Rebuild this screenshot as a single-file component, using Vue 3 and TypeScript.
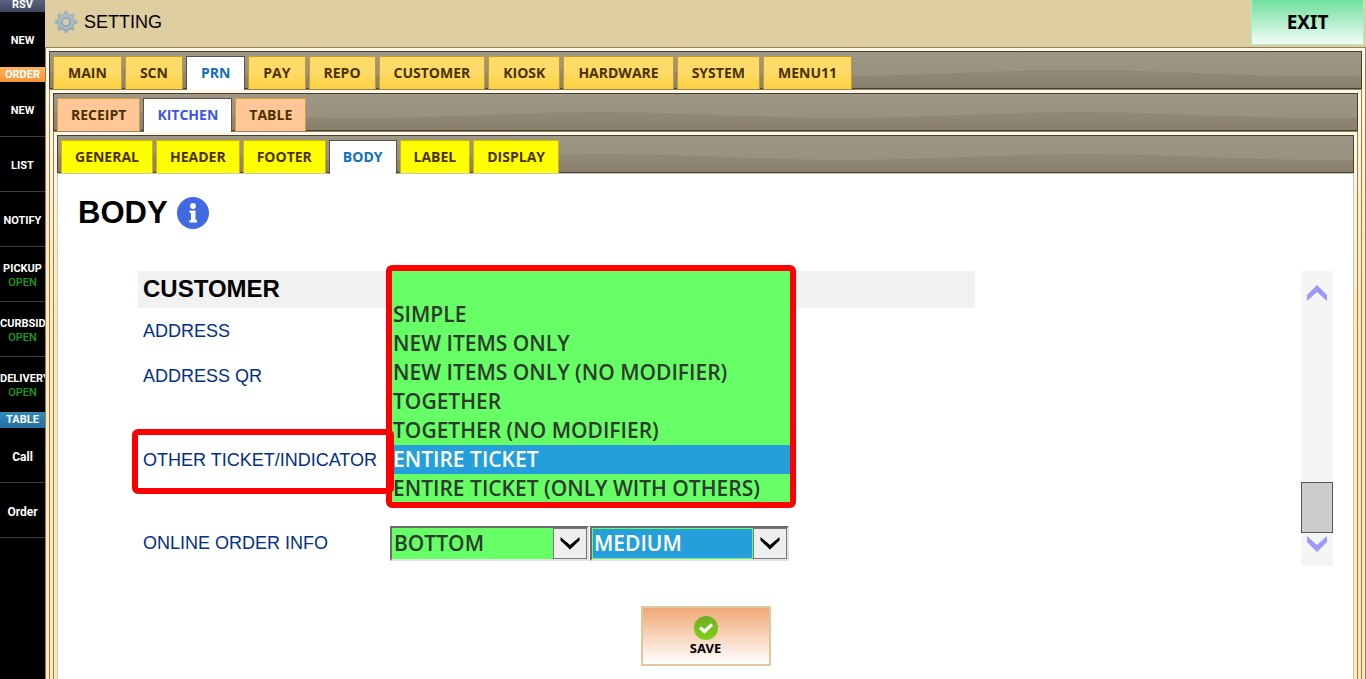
<script setup lang="ts">
import { ref } from 'vue'

interface SideItem { kind: 'head' | 'item'; text: string; tone?: string; sub?: string; large?: boolean }

const side: SideItem[] = [
  { kind: 'head', text: 'RSV', tone: 'rsv' },
  { kind: 'item', text: 'NEW', tone: 'last' },
  { kind: 'head', text: 'ORDER', tone: 'order' },
  { kind: 'item', text: 'NEW' },
  { kind: 'item', text: 'LIST' },
  { kind: 'item', text: 'NOTIFY' },
  { kind: 'item', text: 'PICKUP', sub: 'OPEN' },
  { kind: 'item', text: 'CURBSIDE', sub: 'OPEN' },
  { kind: 'item', text: 'DELIVERY', sub: 'OPEN', tone: 'last' },
  { kind: 'head', text: 'TABLE', tone: 'tables' },
  { kind: 'item', text: 'Call', large: true },
  { kind: 'item', text: 'Order', large: true },
]

const mainTabs: string[] = ['MAIN', 'SCN', 'PRN', 'PAY', 'REPO', 'CUSTOMER', 'KIOSK', 'HARDWARE', 'SYSTEM', 'MENU11']
const printerTabs: string[] = ['RECEIPT', 'KITCHEN', 'TABLE']
const kitchenTabs: string[] = ['GENERAL', 'HEADER', 'FOOTER', 'BODY', 'LABEL', 'DISPLAY']
const mainTab = ref('PRN')
const printerTab = ref('KITCHEN')
const kitchenTab = ref('BODY')

const modes: string[] = ['', 'SIMPLE', 'NEW ITEMS ONLY', 'NEW ITEMS ONLY (NO MODIFIER)', 'TOGETHER', 'TOGETHER (NO MODIFIER)', 'ENTIRE TICKET', 'ENTIRE TICKET (ONLY WITH OTHERS)']
const mode = ref('ENTIRE TICKET')
const place = ref('BOTTOM')
const size = ref('MEDIUM')
</script>

<template>
  <div class="app">
    <nav class="side">
      <template v-for="(s, i) in side" :key="i">
        <div v-if="s.kind === 'head'" class="side-head" :class="s.tone">{{ s.text }}</div>
        <button v-else class="side-item" :class="[s.tone, { large: s.large }]">
          <span>{{ s.text }}</span>
          <span v-if="s.sub" class="open">{{ s.sub }}</span>
        </button>
      </template>
    </nav>

    <div class="work">
      <header class="top">
        <svg class="gear" viewBox="0 0 24 24" width="24" height="24" aria-hidden="true">
          <defs>
            <linearGradient id="gearFill" x1="0" y1="0" x2="0" y2="1">
              <stop offset="0" stop-color="#b4bdbf" />
              <stop offset="1" stop-color="#93a2a9" />
            </linearGradient>
          </defs>
          <g fill="url(#gearFill)">
            <path v-for="n in 8" :key="n" d="M9.500 5L10.300 0.500H13.700L14.500 5Z" :transform="`rotate(${n * 45} 12 12)`" />
            <circle cx="12" cy="12" r="8.800" />
          </g>
          <circle cx="12" cy="12" r="6.300" fill="none" stroke="#a6bfcc" stroke-width="2" />
          <circle cx="12" cy="12" r="4" fill="#c3cccc" stroke="#8f9ca2" />
          <circle cx="12" cy="12" r="2" fill="#dfce9f" />
        </svg>
        <span class="title">SETTING</span>
        <button class="exit">EXIT</button>
      </header>

      <div class="panel">
        <div class="bar">
          <button v-for="t in mainTabs" :key="t" class="tab" :class="{ active: t === mainTab }" @click="mainTab = t">{{ t }}</button>
        </div>
        <div class="panel">
          <div class="bar">
            <button v-for="t in printerTabs" :key="t" class="tab printer" :class="{ active: t === printerTab }" @click="printerTab = t">{{ t }}</button>
          </div>
          <div class="panel">
            <div class="bar">
              <button v-for="t in kitchenTabs" :key="t" class="tab kitchen" :class="{ active: t === kitchenTab }" @click="kitchenTab = t">{{ t }}</button>
            </div>

            <main class="content">
              <h1>
                BODY
                <svg viewBox="0 0 32 32" width="32" height="32" aria-hidden="true">
                  <circle cx="16" cy="16" r="16" fill="#4169e1" />
                  <circle cx="16" cy="9" r="2.900" fill="#fff" />
                  <path d="M12.500 13.500H18.500V23H20V25.500H12.500V23H14V16H12.500Z" fill="#fff" />
                </svg>
              </h1>

              <div class="scroller">
                <section class="form">
                  <h2>CUSTOMER</h2>
                  <div class="row">ADDRESS</div>
                  <div class="row">ADDRESS QR</div>
                  <div class="row other">
                    <label class="marked" for="mode">OTHER TICKET/INDICATOR</label>
                    <select id="mode" v-model="mode" class="list" size="8">
                      <option v-for="m in modes" :key="m" :value="m">{{ m }}</option>
                    </select>
                  </div>
                  <div class="row online">
                    <label for="place">ONLINE ORDER INFO</label>
                    <div class="drop">
                      <select id="place" v-model="place"><option>BOTTOM</option><option>TOP</option></select>
                      <span class="arrow"><svg viewBox="0 0 20 14" width="20" height="14"><path d="M0.500 1L10 9L19.500 1V4.500L10 13.500L0.500 4.500Z" /></svg></span>
                    </div>
                    <div class="drop focus">
                      <select v-model="size" aria-label="Size"><option>MEDIUM</option><option>LARGE</option></select>
                      <span class="arrow"><svg viewBox="0 0 20 14" width="20" height="14"><path d="M0.500 1L10 9L19.500 1V4.500L10 13.500L0.500 4.500Z" /></svg></span>
                    </div>
                  </div>
                </section>

                <div class="track">
                  <button class="step" aria-label="Scroll up">
                    <svg viewBox="0 0 20 16" width="20" height="16"><path d="M0 10L10 0L20 10V16L10 7L0 16Z" /></svg>
                  </button>
                  <div class="thumb"></div>
                  <button class="step" aria-label="Scroll down">
                    <svg viewBox="0 0 20 16" width="20" height="16"><path d="M0 6L10 16L20 6V0L10 9L0 0Z" /></svg>
                  </button>
                </div>
              </div>

              <button class="save">
                <svg viewBox="0 0 24 24" width="24" height="24" aria-hidden="true">
                  <defs>
                    <linearGradient id="okFill" x1="0" y1="0" x2="0" y2="1">
                      <stop offset="0" stop-color="#6fae1f" />
                      <stop offset="1" stop-color="#7fd01a" />
                    </linearGradient>
                  </defs>
                  <circle cx="12" cy="12" r="12" fill="url(#okFill)" />
                  <path d="M6 11.500L10.500 15.500L18 8.500" fill="none" stroke="#fff" stroke-width="3.200" />
                </svg>
                SAVE
              </button>
            </main>
          </div>
        </div>
      </div>
    </div>
  </div>
</template>

<style>
body { margin: 0; background: #fff; }
</style>

<style scoped>
* { box-sizing: border-box; }
button { font: inherit; margin: 0; padding: 0; border: 0; cursor: pointer; }
svg { display: block; }
.app {
  display: flex;
  height: 100vh;
  overflow: hidden;
  font-family: "Liberation Sans", Arial, sans-serif;
}

.side {
  flex: 0 0 45px;
  overflow: hidden;
  background: #000;
  color: #fff;
  font: bold 11px/14px Roboto, sans-serif;
}
.side-head { height: 16px; line-height: 16px; text-align: center; }
.rsv { height: 12px; line-height: 10px; background: linear-gradient(#5a6480, #3c4560); }
.order { height: 15px; background: linear-gradient(#ffb35c, #f59332); }
.tables { background: linear-gradient(#2f8cbc, #246f9e); }
.side-item {
  display: flex;
  flex-direction: column;
  align-items: safe center;
  justify-content: center;
  width: 45px;
  height: 55px;
  padding-top: 3px;
  background: #000;
  color: #fff;
  border-bottom: 1px solid #3c3c3c;
  overflow: hidden;
}
.side-item.last { border-bottom-color: #000; }
.large { font-size: 12px; }
.open { color: #14a01c; font-weight: 500; }

.work { flex: 1; min-width: 0; display: flex; flex-direction: column; background: #dfce9f; }
.top {
  display: flex;
  align-items: flex-start;
  height: 47px;
  padding: 0 2px 0 9px;
}
.gear { margin-top: 10px; }
.title { margin: 11px auto 0 6px; font-size: 18px; line-height: 22px; color: #000; }
.exit {
  width: 113px;
  height: 45px;
  border: 1px solid #a6f0c3;
  border-top: 0;
  background: linear-gradient(#6fe09d, #f3fcf7);
  font: bold 19px/44px "Noto Sans", sans-serif;
  color: #000;
}

.panel {
  flex: 1;
  display: flex;
  flex-direction: column;
  padding: 3px 3px 0;
  border: 1px solid #93805a;
  border-bottom: 0;
  background: linear-gradient(#fff7e6, #fff3d6 60px, #fbe9b8 200px);
}
.bar {
  display: flex;
  gap: 3px;
  height: 38px;
  padding: 4px 3px 0;
  border: 1px solid #453f34;
  background:
    url("data:image/svg+xml,%3Csvg xmlns='http://www.w3.org/2000/svg' width='480' height='38'%3E%3Cpath d='M0 18C90 18 150 24 240 24S390 18 480 18V38H0Z' fill='%23756b55' fill-opacity='.28'/%3E%3C/svg%3E") 67px 0 repeat-x,
    linear-gradient(#9f9786, #9a9281 60%, #8f8775);
}
.tab {
  position: relative;
  height: 33px;
  padding: 0 14px;
  border: 1px solid #c79a2c;
  border-bottom: 0;
  background: linear-gradient(#fedb68 45%, #fdd13f);
  color: #4c3000;
  font: bold 14px/32px "Open Sans", sans-serif;
}
.tab.printer { padding: 0 13px; background: #ffc795; border-color: #d99c3f; }
.tab.kitchen { padding: 0 13px; background: #ff0; border-color: #d8b400; }
.tab.active { height: 34px; padding-bottom: 1px; background: #fff; border-color: #5b5446; color: #0f6fc0; }
.tab.printer.active { color: #3a55ec; }

.content {
  flex: 1;
  padding: 21px 20px 0;
  background: #fff;
  border: 1px solid #c9c6bd;
  border-bottom: 0;
}
h1 {
  display: flex;
  align-items: center;
  gap: 9px;
  margin: 0 0 40px;
  font-size: 31px;
  line-height: 36px;
  color: #000;
}
.scroller { display: flex; height: 295px; padding-left: 60px; }
.form { position: relative; flex: 1; color: #003087; font-size: 18px; }
h2 {
  width: 72%;
  height: 37px;
  margin: 0;
  padding-left: 5px;
  background: #f1f1f1;
  color: #000;
  font-size: 24px;
  line-height: 36px;
}
.row { display: flex; align-items: center; height: 45px; padding: 2px 0 0 5px; }
.other { height: 126px; padding-top: 0; }
.marked {
  position: relative;
  z-index: 2;
  width: 262px;
  height: 65px;
  margin-left: -11px;
  padding-left: 5px;
  border: 6px solid #f00;
  border-radius: 6px;
  line-height: 50px;
  white-space: nowrap;
}
select, option { font: 600 21px/29px "Open Sans", sans-serif; }
select { color: #2d3a2d; }
.list {
  position: absolute;
  top: -6px;
  left: 248px;
  width: 410px;
  height: 243px;
  margin: 0;
  padding: 0;
  border: 6px solid #f00;
  border-radius: 6px;
  outline: 0;
  overflow: hidden;
  background: #6f6;
}
.list option { height: 29px; min-height: 29px; padding: 0 1px; }
.list option:checked { background: #259fdc; color: #fff; }

.online { display: grid; grid-template-columns: 246px 199px 199px; column-gap: 1px; height: 38px; }
.drop {
  display: flex;
  height: 35px;
  border: 2px solid;
  border-color: #6d6d6d #e2e2e2 #e2e2e2 #6d6d6d;
  background: #6f6;
}
.online { padding-top: 0; }
.drop select {
  flex: 1;
  min-width: 0;
  margin: 0;
  padding: 0 2px;
  border: 0;
  border-radius: 0;
  outline: 0;
  appearance: none;
  background: #6f6;
}
.drop.focus select { margin: 1px; padding: 0 1px; background: #259fdc; color: #fff; }
.arrow {
  display: grid;
  place-items: center;
  flex: 0 0 34px;
  border: 1px solid #777;
  background: #eee;
  pointer-events: none;
}

.track {
  display: flex;
  flex-direction: column;
  align-items: center;
  width: 32px;
  padding: 14px 0;
  background: #f5f5f5;
}
.step { background: none; }
.step path { fill: #9d99fb; }
.thumb { width: 32px; height: 51px; margin: auto 0 3px; border: 1px solid #555; background: #cdcdcd; }
.save {
  display: flex;
  flex-direction: column;
  align-items: center;
  justify-content: center;
  width: 130px;
  height: 60px;
  margin: 40px auto 0;
  border: 2px solid #dfc89b;
  background: linear-gradient(#efa876, #fff);
  font: bold 13px/16px "Noto Sans", sans-serif;
  color: #000;
}
</style>
